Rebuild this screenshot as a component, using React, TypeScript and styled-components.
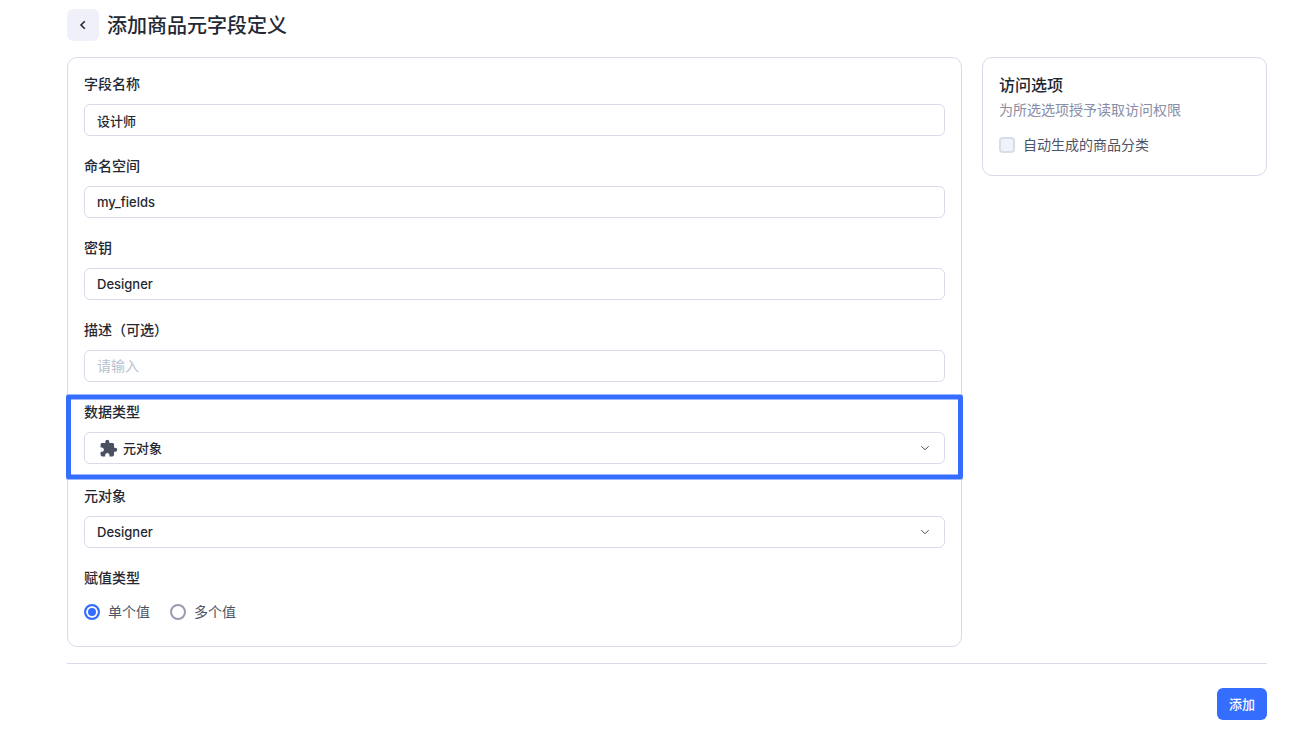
import React, { useState } from "react";
import styled, { createGlobalStyle } from "styled-components";
import { MdExtension } from "react-icons/md";

const GlobalStyle = createGlobalStyle`
  *, *::before, *::after { box-sizing: border-box; }
  body {
    margin: 0;
    background: #fff;
    color: #242833;
    font-family: Inter, "Noto Sans CJK SC", sans-serif;
    font-size: 14px;
    line-height: 20px;
    -webkit-font-smoothing: antialiased;
  }
  button, input, select { font-family: inherit; }
`;

const Page = styled.div`
  padding: 9px 48px 32px 67px;
`;

const Header = styled.header`
  display: flex;
  align-items: center;
  gap: 8px;
  margin-bottom: 16px;
`;

const BackButton = styled.button`
  display: flex;
  align-items: center;
  justify-content: center;
  width: 32px;
  height: 32px;
  padding: 0;
  border: 0;
  border-radius: 6px;
  background: #f0f0fa;
  color: #242833;
  cursor: pointer;
`;

const Title = styled.h1`
  margin: 0;
  padding-top: 2px;
  font-size: 20px;
  line-height: 30px;
  font-weight: 500;
`;

const Columns = styled.div`
  display: grid;
  grid-template-columns: minmax(0, 1fr) 285px;
  align-items: start;
  gap: 20px;
`;

const Card = styled.section`
  border: 1px solid #d9daea;
  border-radius: 10px;
  padding: 16px 16px 20px;
`;

const Form = styled(Card)`
  display: flex;
  flex-direction: column;
  gap: 20px;
`;

const Field = styled.div<{ $highlighted?: boolean }>`
  position: relative;
  display: flex;
  flex-direction: column;
  gap: 10px;
  margin-bottom: ${(p) => (p.$highlighted ? "2px" : "0")};

  &::after {
    content: "";
    display: ${(p) => (p.$highlighted ? "block" : "none")};
    position: absolute;
    inset: -7px -18px -15px;
    border: solid #356dff;
    border-width: 4px 5px;
    border-radius: 2px;
    box-shadow: 0 -1px #9ab6ff, 0 1px #9ab6ff, inset 0 1px #9ab6ff, inset 0 -1px #9ab6ff;
    pointer-events: none;
  }
`;

const Label = styled.label`
  font-weight: 500;
`;

const TextInput = styled.input`
  width: 100%;
  height: 32px;
  padding: 0 12px;
  border: 1px solid #d9daea;
  border-radius: 6px;
  background: #fff;
  color: #242833;
  font-size: 13px;
  line-height: 20px;
  font-weight: 500;
  outline: 0;

  &::placeholder {
    color: #b9bfce;
    font-size: 14px;
    font-weight: 400;
  }
`;

const SelectBox = styled.div`
  display: grid;
  align-items: center;

  & > * { grid-area: 1 / 1; }
`;

const Select = styled.select<{ $withIcon?: boolean }>`
  appearance: none;
  width: 100%;
  height: 32px;
  padding: 0 36px 0 ${(p) => (p.$withIcon ? "38px" : "12px")};
  border: 1px solid #d9daea;
  border-radius: 6px;
  background: #fff;
  color: #242833;
  font-size: 13px;
  font-weight: 500;
`;

const LeadingIcon = styled.span`
  display: flex;
  justify-self: start;
  margin-left: 15px;
  color: #4a5060;
  pointer-events: none;
`;

const Caret = styled.span`
  display: flex;
  justify-self: end;
  margin-right: 14px;
  color: #4a5060;
  pointer-events: none;
`;

const Group = styled.fieldset`
  min-width: 0;
  margin: 0;
  padding: 0;
  border: 0;
`;

const Legend = styled.legend`
  padding: 0 0 10px;
  font-weight: 500;
`;

const Options = styled.div`
  display: flex;
  align-items: center;
  gap: 20px;
  height: 28px;
`;

const Option = styled.label`
  display: flex;
  align-items: center;
  gap: 8px;
  color: #4e5464;
`;

const Radio = styled.input`
  appearance: none;
  width: 16px;
  height: 16px;
  margin: 0;
  border: 2px solid #989bb3;
  border-radius: 50%;
  background: #fff;

  &:checked {
    border-color: #356dff;
    background: #356dff;
    box-shadow: inset 0 0 0 2px #fff;
  }
`;

const Checkbox = styled.input`
  appearance: none;
  width: 16px;
  height: 16px;
  margin: 0;
  border: 2px solid #d8dde9;
  border-radius: 4px;
  background: #f0f3f9;

  &:checked {
    border-color: #356dff;
    background: #356dff;
  }
`;

const AccessTitle = styled.h2`
  margin: 0;
  font-size: 16px;
  line-height: 22px;
  font-weight: 500;
`;

const Hint = styled.p`
  margin: 4px 0 15px;
  color: #878da5;
`;

const Footer = styled.footer`
  display: flex;
  justify-content: flex-end;
  margin-top: 16px;
  padding-top: 24px;
  border-top: 1px solid #d9daea;
`;

const PrimaryButton = styled.button`
  height: 32px;
  padding: 0 12px 2px;
  border: 0;
  border-radius: 6px;
  background: #356dff;
  color: #fff;
  font-size: 13px;
  font-weight: 500;
  cursor: pointer;
`;

const ChevronDown = () => (
  <Caret>
    <svg width="12" height="12" viewBox="0 0 12 12" fill="none" stroke="currentColor" strokeWidth="1" aria-hidden="true">
      <path d="M2.3 4.3 6 7.7l3.7-3.4" />
    </svg>
  </Caret>
);

export default function App() {
  const [name, setName] = useState("设计师");
  const [namespace, setNamespace] = useState("my_fields");
  const [fieldKey, setFieldKey] = useState("Designer");
  const [description, setDescription] = useState("");
  const [multiple, setMultiple] = useState(false);

  const textFields = [
    { id: "name", label: "字段名称", value: name, set: setName },
    { id: "namespace", label: "命名空间", value: namespace, set: setNamespace },
    { id: "key", label: "密钥", value: fieldKey, set: setFieldKey },
    { id: "description", label: "描述（可选）", value: description, set: setDescription },
  ];

  return (
    <>
      <GlobalStyle />
      <Page lang="zh-CN">
        <Header>
          <BackButton type="button" aria-label="返回">
            <svg width="16" height="16" viewBox="0 0 16 16" fill="none" stroke="currentColor" strokeWidth="1.6" aria-hidden="true">
              <path d="M9.8 4.2 6 8l3.8 3.8" />
            </svg>
          </BackButton>
          <Title>添加商品元字段定义</Title>
        </Header>
        <Columns>
          <Form>
            {textFields.map((f) => (
              <Field key={f.id}>
                <Label htmlFor={f.id}>{f.label}</Label>
                <TextInput id={f.id} value={f.value} placeholder="请输入" onChange={(e) => f.set(e.target.value)} />
              </Field>
            ))}
            <Field $highlighted>
              <Label htmlFor="type">数据类型</Label>
              <SelectBox>
                <Select id="type" $withIcon>
                  <option>元对象</option>
                </Select>
                <LeadingIcon>
                  <MdExtension size={19} />
                </LeadingIcon>
                <ChevronDown />
              </SelectBox>
            </Field>
            <Field>
              <Label htmlFor="object">元对象</Label>
              <SelectBox>
                <Select id="object">
                  <option>Designer</option>
                </Select>
                <ChevronDown />
              </SelectBox>
            </Field>
            <Group>
              <Legend>赋值类型</Legend>
              <Options>
                <Option>
                  <Radio type="radio" name="mode" checked={!multiple} onChange={() => setMultiple(false)} />
                  单个值
                </Option>
                <Option>
                  <Radio type="radio" name="mode" checked={multiple} onChange={() => setMultiple(true)} />
                  多个值
                </Option>
              </Options>
            </Group>
          </Form>
          <Card as="aside">
            <AccessTitle>访问选项</AccessTitle>
            <Hint>为所选选项授予读取访问权限</Hint>
            <Option>
              <Checkbox type="checkbox" />
              自动生成的商品分类
            </Option>
          </Card>
        </Columns>
        <Footer>
          <PrimaryButton type="button">添加</PrimaryButton>
        </Footer>
      </Page>
    </>
  );
}
